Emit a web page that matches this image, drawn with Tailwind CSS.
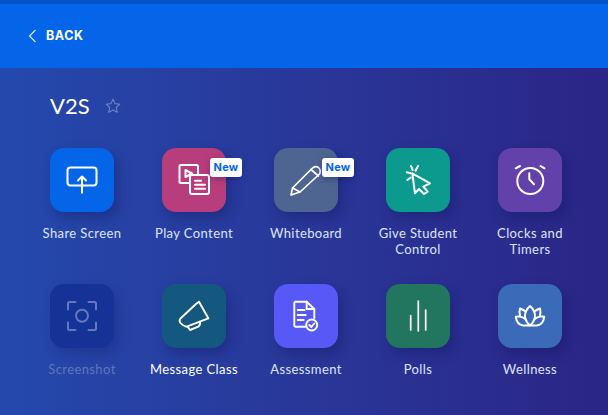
<!DOCTYPE html>
<html lang="en">
<head>
  <meta charset="UTF-8" />
  <title>V2S</title>
  <script src="https://cdn.jsdelivr.net/npm/@tailwindcss/browser@4"></script>
</head>
<body class="w-[608px] h-[415px] overflow-hidden bg-gradient-to-r from-[#2449ad] to-[#2a2586] font-['Lato',sans-serif] text-white">

  <!-- Top bar -->
  <header class="h-[68px] bg-[#0565e8] border-t-4 border-[#0452c8] flex items-center pl-[28px]">
    <svg class="w-[9px] h-[14px]" viewBox="0 0 9 14" fill="none" stroke="#dbe7fb" stroke-width="1.2"><path d="M7.500 1 1.500 7l6 6" /></svg>
    <span class="ml-[9px] text-[12.5px] leading-none font-['Inter',sans-serif] font-bold tracking-[0.6px]">BACK</span>
  </header>

  <div class="flex items-center gap-[15px] pl-[50px] pb-[4px] h-[80px]">
    <h1 class="text-[22px] leading-[28px] font-normal">V2S</h1>
    <svg class="w-4 h-4" viewBox="0 0 18 18" fill="none" stroke="#6f83c8" stroke-width="1.2" stroke-linejoin="round"><path d="M9 1.300 11.300 6.300 16.700 7 12.700 10.700 13.800 16.200 9 13.500 4.200 16.200 5.300 10.700 1.300 7 6.700 6.300Z" /></svg>
  </div>

  <main class="grid grid-cols-[repeat(5,112px)] auto-rows-[136px] pl-[26px]">

    <div class="flex flex-col items-center">
      <div class="w-16 h-16 rounded-[14px] bg-[#0565e8] shadow-[4px_6px_12px_rgba(15,20,90,0.35)] flex items-center justify-center">
        <svg class="w-8 h-8" viewBox="0 0 32 32" fill="none" stroke="white" stroke-width="2" stroke-linecap="round" stroke-linejoin="round"><rect x="1.500" y="3.500" width="29" height="18" rx="3" /><path d="M16 28.700V12.500M12 16.500l4-4 4 4" /></svg>
      </div>
      <p class="mt-[13px] w-[104px] text-center text-[13px] leading-4 tracking-[0.4px] text-[#dfe5f8]">Share Screen</p>
    </div>

    <div class="flex flex-col items-center">
      <div class="relative w-16 h-16 rounded-[14px] bg-[#b83d7c] shadow-[4px_6px_12px_rgba(15,20,90,0.35)] flex items-center justify-center">
        <svg class="w-8 h-8" viewBox="0 0 32 32" fill="none" stroke="white" stroke-width="2" stroke-linejoin="round" stroke-linecap="round"><path d="M12 19H3Q1.500 19 1.500 17.500V2.500Q1.500 1 3 1H18.500Q20 1 20 2.500V11" /><path d="M7.500 6v7l6.500-3.500Z" /><rect x="12" y="11" width="19" height="19" rx="2" /><path d="M17 16.700h6M17 20.700h10M17 24.700h10" /></svg>
        <span class="absolute -right-[16px] top-[10px] w-[32px] h-[19px] text-center bg-white rounded-[3px] text-[11px] leading-[19px] font-['Inter',sans-serif] font-bold tracking-[0.3px] text-[#0565e8] shadow-[0_2px_6px_rgba(15,20,90,0.35)]">New</span>
      </div>
      <p class="mt-[13px] w-[104px] text-center text-[13px] leading-4 tracking-[0.4px] text-[#dfe5f8]">Play Content</p>
    </div>

    <div class="flex flex-col items-center">
      <div class="relative w-16 h-16 rounded-[14px] bg-[#4d6590] shadow-[4px_6px_12px_rgba(15,20,90,0.35)] flex items-center justify-center">
        <svg class="w-8 h-8" viewBox="0 0 32 32" fill="none" stroke="white" stroke-width="1.7" stroke-linejoin="round" stroke-linecap="round"><path d="M1 31 2.500 24 22 4.500Q25 1.500 28.500 3.500 31.500 6.500 29.500 10L10 28Z" /><path d="M2.500 24 10 28M21 5.500 28.500 12" /></svg>
        <span class="absolute -right-[16px] top-[10px] w-[32px] h-[19px] text-center bg-white rounded-[3px] text-[11px] leading-[19px] font-['Inter',sans-serif] font-bold tracking-[0.3px] text-[#0565e8] shadow-[0_2px_6px_rgba(15,20,90,0.35)]">New</span>
      </div>
      <p class="mt-[13px] w-[104px] text-center text-[13px] leading-4 tracking-[0.4px] text-[#dfe5f8]">Whiteboard</p>
    </div>

    <div class="flex flex-col items-center">
      <div class="w-16 h-16 rounded-[14px] bg-[#0c9a8e] shadow-[4px_6px_12px_rgba(15,20,90,0.35)] flex items-center justify-center">
        <svg class="w-8 h-8" viewBox="0 0 32 32" fill="none" stroke="white" stroke-width="2" stroke-linejoin="round" stroke-linecap="round"><path d="M10.300 9.300 28 19.300 21.300 22.700 25.700 27.700 22 30 17 25 13 29.300Z" /><path d="M9 2 10.700 6M16 2 13.500 6.700M4.700 8.300 8.700 9.300M5.300 16 8.700 13.700" /></svg>
      </div>
      <p class="mt-[13px] w-[104px] text-center text-[13px] leading-4 tracking-[0.4px] text-[#dfe5f8]">Give Student Control</p>
    </div>

    <div class="flex flex-col items-center">
      <div class="w-16 h-16 rounded-[14px] bg-[#6341ab] shadow-[4px_6px_12px_rgba(15,20,90,0.35)] flex items-center justify-center">
        <svg class="w-8 h-8" viewBox="0 0 32 32" fill="none" stroke="white" stroke-width="2" stroke-linecap="round" stroke-linejoin="round"><circle cx="16.300" cy="17" r="13" /><path d="M15.300 9.300v6L20 20.300" /><path d="M1.700 4.300 6 2M30.500 4.300 26.500 2" /></svg>
      </div>
      <p class="mt-[13px] w-[104px] text-center text-[13px] leading-4 tracking-[0.4px] text-[#dfe5f8]">Clocks and Timers</p>
    </div>

    <div class="flex flex-col items-center">
      <div class="w-16 h-16 rounded-[14px] bg-[#153397] shadow-[4px_6px_12px_rgba(15,20,90,0.25)] flex items-center justify-center">
        <svg class="w-8 h-8" viewBox="0 0 32 32" fill="none" stroke="#6678bd" stroke-width="2" stroke-linecap="round" stroke-linejoin="round"><path d="M2 9.500V3.500Q2 2 3.500 2H9.500M22.500 2H28.500Q30 2 30 3.500V9.500M30 22.500V28.500Q30 30 28.500 30H22.500M9.500 30H3.500Q2 30 2 28.500V22.500" /><circle cx="16" cy="15.700" r="6" /></svg>
      </div>
      <p class="mt-[13px] w-[104px] text-center text-[13px] leading-4 tracking-[0.4px] text-[#6074bd]">Screenshot</p>
    </div>

    <div class="flex flex-col items-center">
      <div class="w-16 h-16 rounded-[14px] bg-[#15587f] shadow-[4px_6px_12px_rgba(15,20,90,0.35)] flex items-center justify-center">
        <svg class="w-8 h-8" viewBox="0 0 32 32" fill="none" stroke="white" stroke-width="1.9" stroke-linecap="round" stroke-linejoin="round"><path d="M17.700 4.300 21 1.700 30.300 18.300 8.700 26.700Q5 26 2.500 23 .5 20 3 18Z" /><path d="M9.700 26.700 12 30 20.300 26.700Q22.500 25 22 21.700" /></svg>
      </div>
      <p class="mt-[13px] w-[104px] text-center text-[13px] leading-4 tracking-[0.4px] text-white">Message Class</p>
    </div>

    <div class="flex flex-col items-center">
      <div class="w-16 h-16 rounded-[14px] bg-[#5659f5] shadow-[4px_6px_12px_rgba(15,20,90,0.35)] flex items-center justify-center">
        <svg class="w-8 h-8" viewBox="0 0 32 32" fill="none" stroke="white" stroke-width="1.9" stroke-linecap="round" stroke-linejoin="round"><path d="M15.500 26.700H5.500Q4.300 26.700 4.300 25.500V3Q4.300 1.700 5.500 1.700H16.700L24.300 9V18" /><path d="M16.700 1.700V9H24.300" /><path d="M7.700 10h7M7.700 15h8M7.700 20h6" /><circle cx="21.700" cy="25" r="5.500" /><path d="M19.300 25 21.300 27 24.300 23.500" /></svg>
      </div>
      <p class="mt-[13px] w-[104px] text-center text-[13px] leading-4 tracking-[0.4px] text-[#dfe5f8]">Assessment</p>
    </div>

    <div class="flex flex-col items-center">
      <div class="w-16 h-16 rounded-[14px] bg-[#22755f] shadow-[4px_6px_12px_rgba(15,20,90,0.35)] flex items-center justify-center">
        <svg class="w-8 h-8" viewBox="0 0 32 32" fill="none" stroke="white" stroke-width="1.7" stroke-linecap="round"><path d="M8.700 15.700V30M16.300 1V31M23.700 10V30" /></svg>
      </div>
      <p class="mt-[13px] w-[104px] text-center text-[13px] leading-4 tracking-[0.4px] text-[#dfe5f8]">Polls</p>
    </div>

    <div class="flex flex-col items-center">
      <div class="w-16 h-16 rounded-[14px] bg-[#3a6ab8] shadow-[4px_6px_12px_rgba(15,20,90,0.35)] flex items-center justify-center">
        <svg class="w-8 h-8" viewBox="0 0 32 32" fill="none" stroke="white" stroke-width="2" stroke-linejoin="round" stroke-linecap="round"><path d="M16 6Q21 10.500 21 16 21 21 16 25.500 11 21 11 16 11 10.500 16 6Z" /><path d="M11.500 11.500Q9 9.500 6 8.500 5 12 6 15.500M20.500 11.500Q23 9.500 26 8.500 27 12 26 15.500" /><path d="M16 25.500H9Q3 25 1.700 16.700 7 15.500 11.500 19M16 25.500H23Q29 25 30.300 16.700 25 15.500 20.500 19" /></svg>
      </div>
      <p class="mt-[13px] w-[104px] text-center text-[13px] leading-4 tracking-[0.4px] text-[#dfe5f8]">Wellness</p>
    </div>

  </main>
</body>
</html>
